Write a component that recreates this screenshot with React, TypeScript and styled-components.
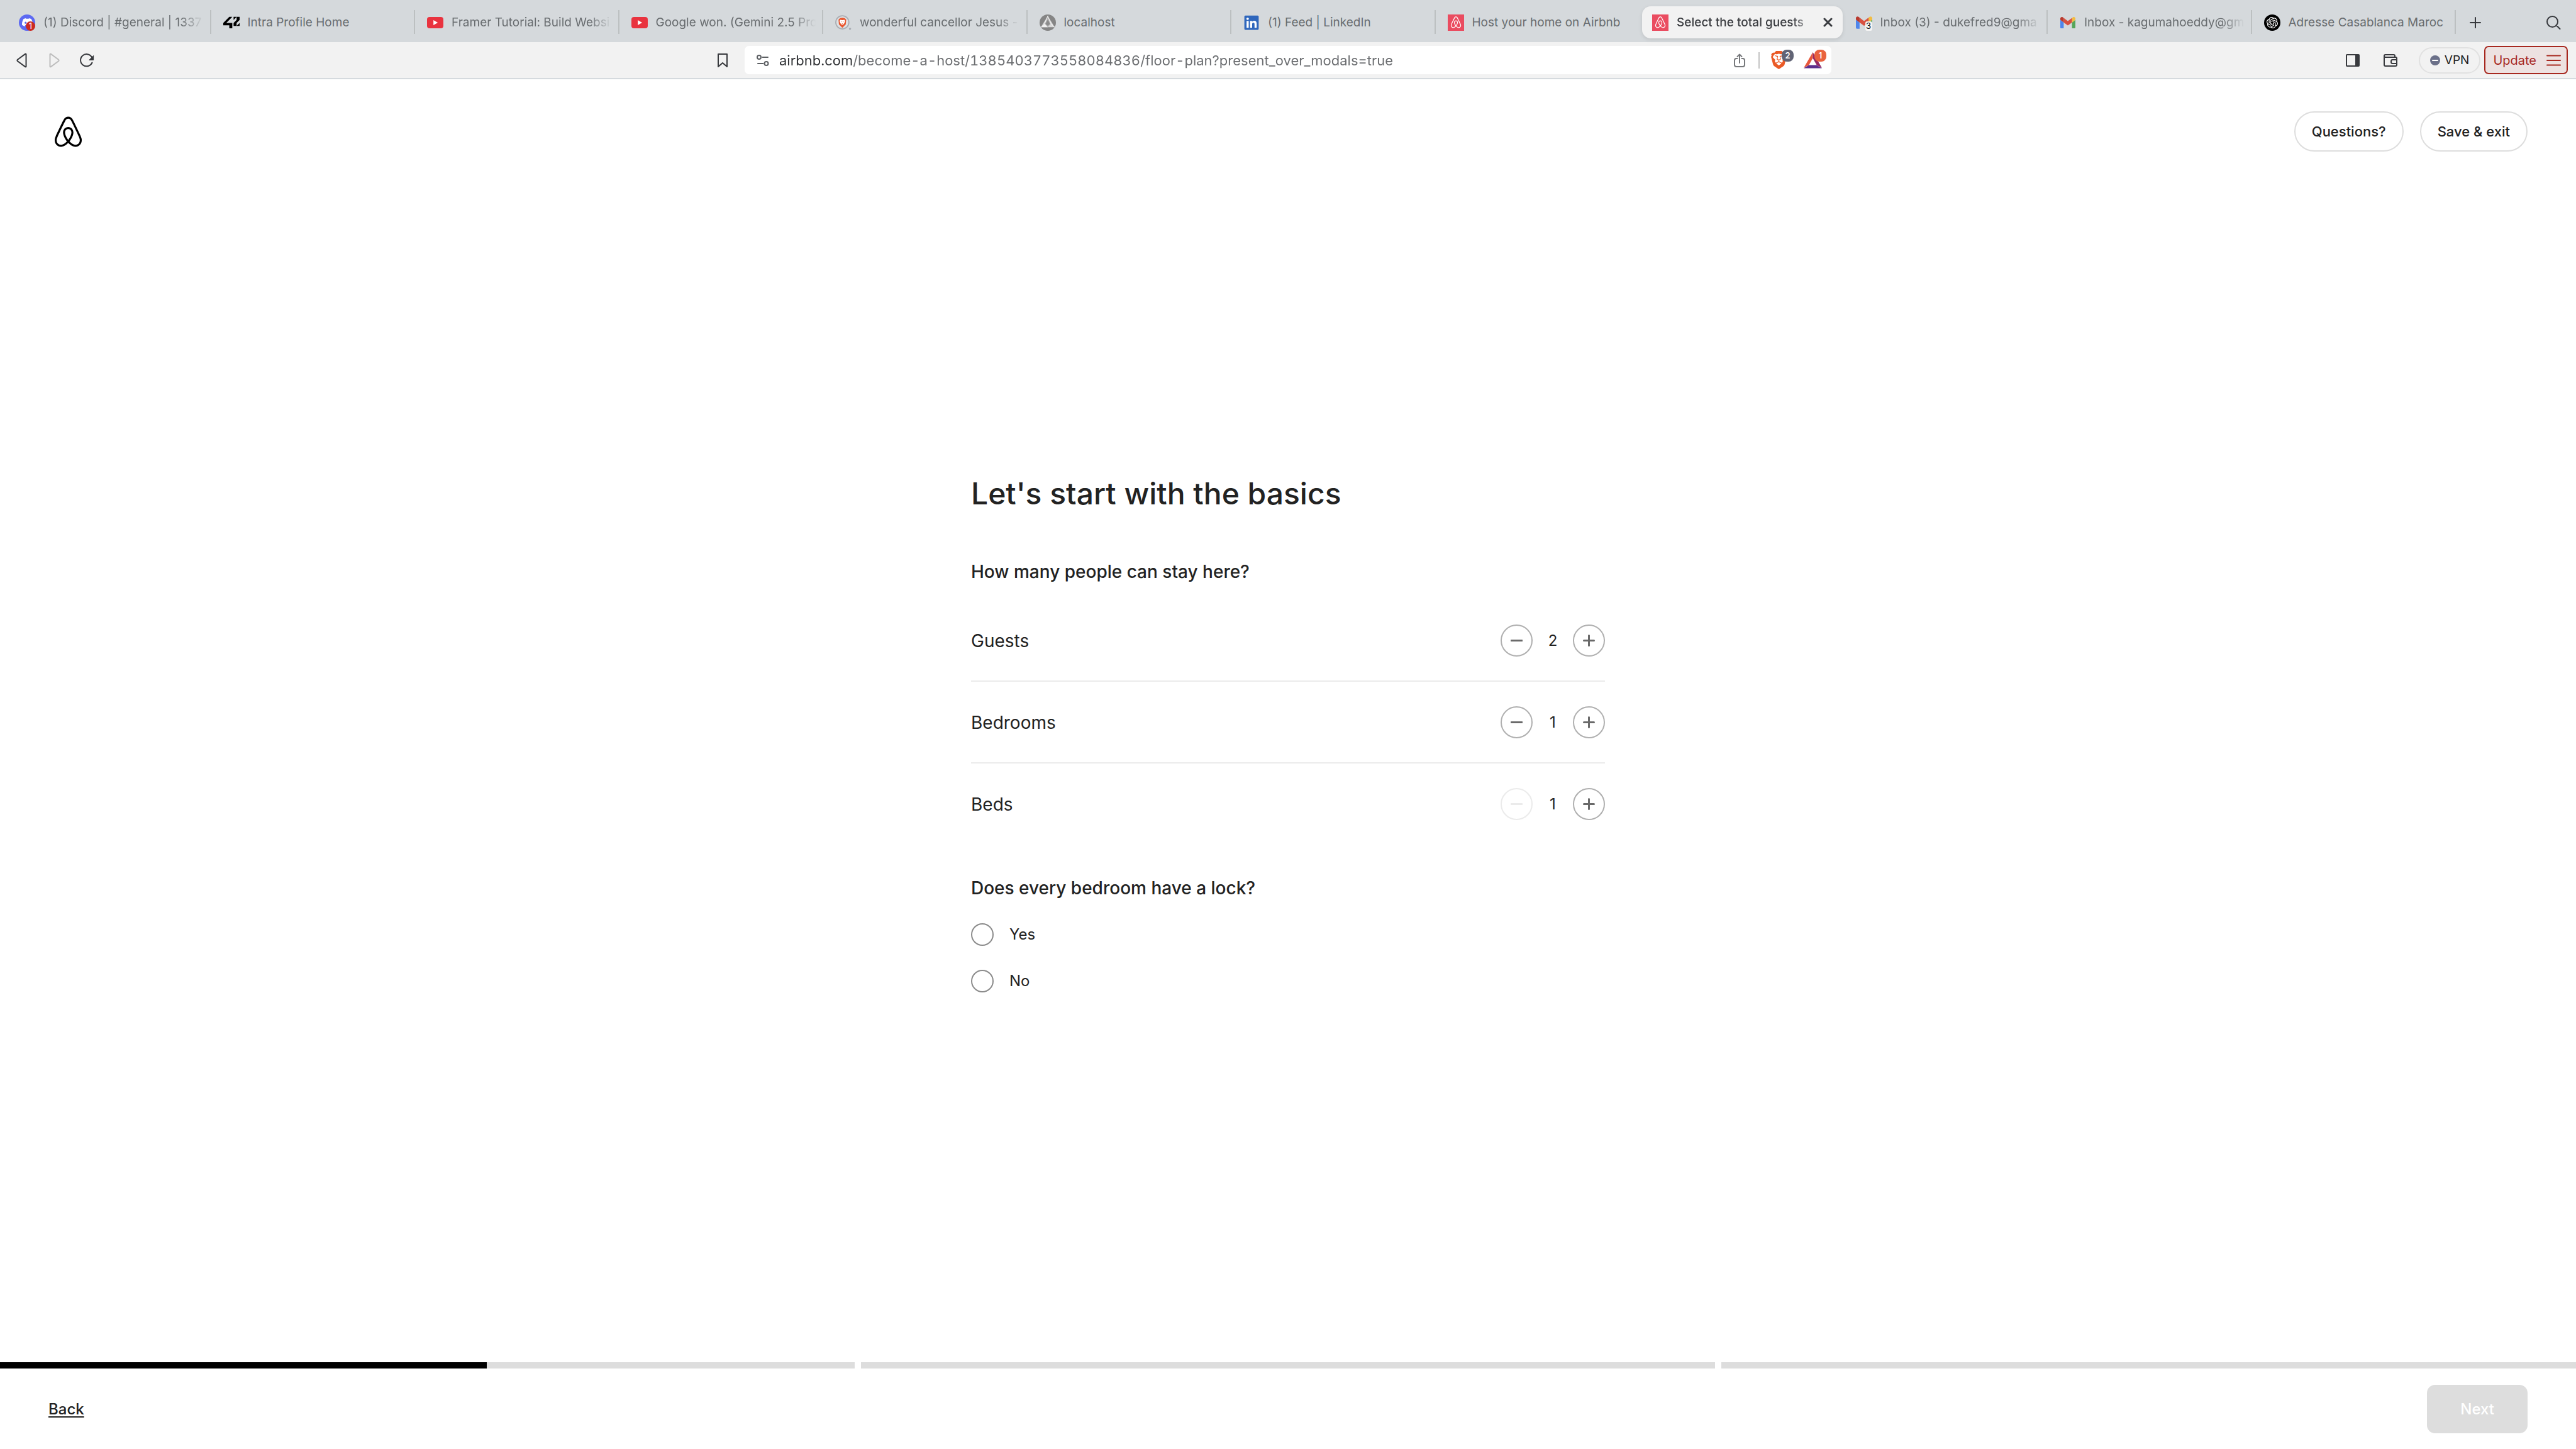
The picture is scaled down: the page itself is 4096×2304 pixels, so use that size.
import React, { useState } from "react";
import styled, { createGlobalStyle, css } from "styled-components";
import { SiDiscord, SiOpenai, SiBrave } from "react-icons/si";
import { FaLinkedin } from "react-icons/fa";

const GlobalStyle = createGlobalStyle`
  *, *::before, *::after { box-sizing: border-box; }
  body { margin: 0; background: #fff; }
  button, input { font: inherit; color: inherit; }
  button { padding: 0; border: 0; background: none; cursor: pointer; }
  svg { display: block; flex: none; }
`;

const Screen = styled.div`
  display: flex;
  flex-direction: column;
  min-height: 100vh;
  color: #222;
  font-family: Inter, "Liberation Sans", sans-serif;
`;

/* ---------- Browser tab strip ---------- */

const TabStrip = styled.div`
  display: flex;
  height: 67px;
  padding: 10px 0 6px 11px;
  background: #d5d9dc;
  color: #696d70;
  font-size: 19px;
  line-height: 24px;
`;

const TabList = styled.div`
  display: grid;
  grid-auto-flow: column;
  grid-auto-columns: minmax(0, 1fr);
  flex: 1;
  min-width: 0;
`;

const Tab = styled.div<{ $active?: boolean; $divided?: boolean }>`
  display: flex;
  align-items: center;
  gap: 13px;
  min-width: 0;
  padding: 0 12px 0 19px;
  position: relative;

  ${(p) =>
    p.$divided &&
    css`
      &::after {
        content: "";
        position: absolute;
        right: 0;
        top: 6px;
        bottom: 7px;
        width: 2px;
        background: #bcc0c1;
      }
    `}

  ${(p) =>
    p.$active &&
    css`
      margin: 0 2px 0 4px;
      padding: 0 16px;
      border-radius: 14px;
      background: #f2f2f2;
      box-shadow: 0 2px 6px rgba(0, 0, 0, 0.1);
      color: #3b3d41;
      font-weight: 500;
    `}
`;

const TabTitle = styled.span<{ $fade?: boolean }>`
  flex: 1;
  min-width: 0;
  overflow: hidden;
  white-space: nowrap;
  ${(p) => p.$fade && "mask-image: linear-gradient(to left, transparent, #000 36px);"}
`;

const Favicon = styled.span`
  display: grid;
  place-items: center;
  flex: none;
  width: 26px;
  height: 26px;
  position: relative;
`;

const Disc = styled.span<{ $bg: string }>`
  display: grid;
  place-items: center;
  width: 26px;
  height: 26px;
  border-radius: 50%;
  background: ${(p) => p.$bg};
  color: #fff;
`;

const LinkedinIcon = styled(FaLinkedin)`
  background: radial-gradient(#fff 60%, transparent 61%);
  color: #2e66bc;
`;

const FaviconCount = styled.span<{ $plain?: boolean }>`
  position: absolute;
  right: 0;
  bottom: 0;
  width: 15px;
  height: 15px;
  border-radius: 8px;
  background: #cc2a22;
  color: #fff;
  font-size: 13px;
  line-height: 15px;
  text-align: center;
  ${(p) =>
    p.$plain &&
    css`
      width: 11px;
      border-radius: 3px;
      background: #f4f4f4;
      color: #000;
    `}
`;

const StripActions = styled.div`
  display: flex;
  flex: none;
  align-items: center;
  justify-content: space-between;
  width: 191px;
  padding: 0 24px 0 22px;
  color: #37393d;
`;

/* ---------- Browser toolbar ---------- */

const Toolbar = styled.div`
  display: grid;
  grid-template-columns: 1fr minmax(0, 1728px) 1fr;
  align-items: center;
  height: 59px;
  border-bottom: 2px solid #d5dade;
  background: #f2f2f2;
  color: #37393d;
`;

const NavButtons = styled.div`
  display: flex;
  align-items: center;
  gap: 29px;
  padding: 0 24px;
`;

const IconButton = styled.button<{ $tint?: string; $last?: boolean }>`
  display: grid;
  place-items: center;
  ${(p) => p.$tint && `color: ${p.$tint};`}
  ${(p) => p.$last && "margin-left: auto;"}
`;

const AddressBar = styled.div`
  display: flex;
  align-items: center;
  height: 45px;
  padding: 0 8px 0 19px;
  border-radius: 7px;
  background: #fff;
`;

const AddressInput = styled.input`
  flex: 1;
  min-width: 0;
  height: 32px;
  margin-left: 16px;
  padding: 0;
  border: 0;
  outline: 0;
  background: linear-gradient(to right, #303235 118px, #6b6d70 118px);
  background-clip: text;
  color: transparent;
  font-size: 22px;
  font-variant-numeric: tabular-nums;
`;

const AddressDivider = styled.span`
  width: 2px;
  height: 26px;
  margin: 0 18px 0 21px;
  background: #c4c4c4;
`;

const BadgeButton = styled.button`
  display: flex;
  align-items: center;
  width: 36px;
  height: 30px;
  margin-right: 16px;
  position: relative;
  &:last-child { margin-right: 0; }
`;

const Badge = styled.span<{ $bg: string }>`
  position: absolute;
  top: -2px;
  right: 0;
  width: 19px;
  height: 19px;
  border-radius: 8px;
  background: ${(p) => p.$bg};
  color: #fff;
  font-size: 13px;
  font-weight: 600;
  line-height: 19px;
  text-align: center;
`;

const ToolbarEnd = styled.div`
  display: flex;
  align-items: center;
  justify-content: flex-end;
  padding-right: 13px;
`;

const EndIcons = styled.div`
  display: flex;
  gap: 38px;
  margin-right: 34px;
`;

const VpnButton = styled.button`
  display: flex;
  align-items: center;
  gap: 7px;
  height: 42px;
  margin-right: 6px;
  padding: 0 16px;
  border: 2px solid #e1e1e1;
  border-radius: 21px;
  color: #1d1f25;
  font-size: 19px;
`;

const UpdateButton = styled.button`
  display: flex;
  align-items: center;
  gap: 16px;
  height: 45px;
  padding: 0 9px 0 12px;
  border: 2px solid #a7281f;
  border-radius: 7px;
  background: #ede2e1;
  color: #a7281f;
  font-size: 20px;
`;

/* ---------- Page ---------- */

const PageHeader = styled.header`
  display: flex;
  align-items: center;
  justify-content: space-between;
  padding: 51px 77px 51px 83px;
`;

const HomeLink = styled.a`
  color: #000;
`;

const HeaderActions = styled.div`
  display: flex;
  gap: 26px;
`;

const PillButton = styled.button`
  height: 64px;
  padding: 0 26px;
  border: 2px solid #ddd;
  border-radius: 32px;
  background: #fff;
  font-size: 22px;
  font-weight: 500;
`;

const Main = styled.main`
  display: flex;
  flex: 1;
  flex-direction: column;
  align-items: center;
  justify-content: center;
  padding-bottom: 124px;
`;

const Form = styled.form`
  width: 100%;
  max-width: 1008px;
`;

const Title = styled.h1`
  margin: 0 0 76px;
  font-size: 48px;
  font-weight: 500;
  line-height: 58px;
`;

const Question = styled.h2`
  display: block;
  margin: 0;
  font-size: 28px;
  font-weight: 500;
  line-height: 38px;
`;

const CounterList = styled.div`
  margin: 26px 0 51px;
`;

const CounterRow = styled.div`
  display: flex;
  align-items: center;
  justify-content: space-between;
  padding: 39px 0 38px;
  font-size: 28px;
  line-height: 38px;
  & + & { border-top: 2px solid #ebebeb; }
`;

const Stepper = styled.div`
  display: flex;
  align-items: center;
`;

const StepButton = styled.button`
  display: grid;
  place-items: center;
  width: 51px;
  height: 51px;
  border: 2px solid #b0b0b0;
  border-radius: 50%;
  color: #6a6a6a;
  &:disabled {
    border-color: #ebebeb;
    color: #ebebeb;
    cursor: default;
  }
`;

const StepValue = styled.output`
  width: 64px;
  font-size: 24px;
  text-align: center;
`;

const Options = styled.fieldset`
  display: flex;
  flex-direction: column;
  gap: 38px;
  margin: 0;
  padding: 0;
  border: 0;
`;

const OptionsLegend = styled.legend`
  margin-bottom: 37px;
  padding: 0;
`;

const Option = styled.label`
  display: flex;
  align-items: center;
  gap: 25px;
  height: 36px;
  font-size: 24px;
  line-height: 34px;
`;

const Radio = styled.input`
  appearance: none;
  width: 36px;
  height: 36px;
  margin: 0;
  border: 2px solid #8c8c8c;
  border-radius: 50%;
  background: #fff;
  &:checked { border: 11px solid #222; }
`;

const Footer = styled.footer`
  display: flex;
  flex-direction: column;
`;

const Progress = styled.div`
  display: grid;
  grid-template-columns: repeat(3, 1fr);
  gap: 10px;
`;

const ProgressTrack = styled.div`
  height: 10px;
  background: #ddd;
`;

const ProgressFill = styled.div`
  height: 100%;
  background: #000;
`;

const FooterBar = styled.div`
  display: flex;
  align-items: center;
  justify-content: space-between;
  height: 128px;
  padding: 0 77px;
  font-size: 24px;
  font-weight: 500;
`;

const BackButton = styled.button`
  text-decoration: underline;
  text-decoration-thickness: 2px;
  text-underline-offset: 3px;
  text-decoration-skip-ink: none;
`;

const NextButton = styled.button`
  height: 77px;
  padding: 0 53px;
  border-radius: 13px;
  background: #ddd;
  color: #fff;
`;

/* ---------- Drawings ---------- */

const belo =
  "M16 1c2.008 0 3.463.963 4.751 3.269l.533 1.025c1.954 3.83 6.114 12.54 7.1 14.836l.145.353c.667 1.591.91 2.472.96 3.396l.01.415.001.228c0 4.062-2.877 6.478-6.357 6.478-2.224 0-4.556-1.258-6.709-3.386l-.257-.26-.172-.179h-.011l-.176.185c-2.044 2.1-4.267 3.42-6.414 3.615l-.28.019-.267.006C5.377 31 2.5 28.584 2.5 24.522l.005-.469c.026-.928.23-1.768.83-3.244l.216-.524c.966-2.298 6.083-12.989 7.707-16.034C12.537 1.963 13.992 1 16 1zm0 2c-1.239 0-2.053.539-2.987 2.21l-.523 1.008c-1.926 3.776-6.06 12.43-7.031 14.692l-.345.836c-.427 1.071-.573 1.655-.605 2.24l-.009.33v.206C4.5 27.395 6.411 29 8.857 29c1.773 0 3.87-1.236 5.831-3.354-2.295-2.938-3.855-6.45-3.855-8.91 0-2.913 1.933-5.386 5.178-5.42 3.223.034 5.156 2.507 5.156 5.42 0 2.456-1.555 5.96-3.855 8.907C19.277 27.766 21.37 29 23.142 29c2.447 0 4.358-1.605 4.358-4.478l-.004-.411c-.019-.672-.17-1.296-.714-2.62l-.248-.6c-1.065-2.478-5.993-12.768-7.538-15.664C18.053 3.539 17.24 3 16 3zm.01 10.316c-2.01.021-3.177 1.514-3.177 3.42 0 1.797 1.18 4.58 2.955 7.044l.21.287.174-.234c1.73-2.385 2.898-5.066 2.989-6.875l.006-.221c0-1.906-1.167-3.4-3.156-3.421h-.001z";

const Belo = ({ size }: { size: number }) => (
  <svg width={size} height={size} viewBox="0 0 32 32" fill="currentColor">
    <path d={belo} />
  </svg>
);

const AirbnbIcon = () => (
  <svg width="26" height="26" viewBox="0 0 32 32">
    <rect width="32" height="32" fill="#ea4c60" />
    <path d={belo} fill="#fff" transform="translate(4.2 3.4) scale(.74)" />
  </svg>
);

const FortyTwoIcon = () => (
  <svg width="26" height="26" viewBox="32 -184 896 896">
    <path d="M32 412.6h330.1V578h164.7V279.1H197.3L526.8-51.1H362.1L32 279.1zM597.9 114.2 762.7-51.1H597.9zM762.7 114.2 597.9 279.1v164.8h164.8V279.1L928 114.2V-51.1H762.7zM928 279.1 762.7 443.9H928z" />
  </svg>
);

const YoutubeIcon = () => (
  <svg width="26" height="26" viewBox="0 0 32 32">
    <rect y="5" width="32" height="22" rx="5" fill="#e9333f" />
    <path d="M12.5 11.2v9.6l8.6-4.8z" fill="#fff" />
  </svg>
);

const BraveSearchIcon = () => (
  <svg width="26" height="26" viewBox="0 0 32 32">
    <circle cx="14" cy="15.5" r="12.8" fill="#dfe2e4" stroke="#a9adb3" strokeWidth="2.2" />
    <circle cx="29" cy="28" r="2.2" fill="#a9adb3" />
    <path d="M14 6.500l4.500.5 3 3-.8 9.500L14 26l-6.700-6.500L6.500 10l3-3z" fill="#e8562e" />
    <path d="M10 10.500l4 .7 4-.7 1.500 2-1.500 4.500-2 2.300-2 1-2-1-2-2.300-1.500-4.500z" fill="#fff" />
    <path d="M11 13.200l2 .7-.3 1.500zM17 13.200l-2 .7.300 1.500zM12.600 17.600h2.800L14 19z" fill="#e8562e" />
  </svg>
);

const LocalhostIcon = () => (
  <svg width="26" height="26" viewBox="0 0 32 32">
    <defs>
      <clipPath id="disc"><circle cx="16" cy="16" r="16" /></clipPath>
    </defs>
    <g clipPath="url(#disc)">
      <path d="M0 0h32v32H0z" fill="#858585" />
      <path d="M16 3 2.500 25h27z" fill="#d9d9d9" />
      <path d="M16 3 10 18l6 7 6-7z" fill="#b3b3b3" />
      <path d="M16 10l-4.500 8.500L16 22l4.500-3.500z" fill="#8c8c8c" />
      <path d="M2.500 25 10 18l6 7z" fill="#f0f0f0" />
      <path d="M16 3l-6 15M16 3l6 15 7.500 7" fill="none" stroke="#fff" />
    </g>
  </svg>
);

const GmailIcon = ({ size }: { size: number }) => (
  <svg width={size} height={size} viewBox="0 -3 24 24">
    <path d="M1.600 18h3.800V8.700L0 4.600v11.800c0 .9.700 1.600 1.600 1.600z" fill="#4f86ec" />
    <path d="M18.600 18h3.800c.9 0 1.600-.7 1.600-1.600V4.600l-5.400 4.100z" fill="#56a55a" />
    <path d="M18.600 1.600v7.100L24 4.600V2.500c0-2-2.300-3.200-3.900-2z" fill="#f2bd42" />
    <path d="M5.400 8.700V1.600L12 6.600l6.600-5v7.100L12 13.600z" fill="#d8503f" />
    <path d="M0 2.500v2.100l5.400 4.100V1.600L3.900.5C2.300-.7 0 .5 0 2.500z" fill="#b83a2e" />
  </svg>
);

type Glyph = { d: string; w: number; h: number; s?: number };

/* Outline glyph drawn at its own pixel size. */
const Line = ({ d, w, h, s = 2 }: Glyph) => (
  <svg
    width={w}
    height={h}
    viewBox={`0 0 ${w} ${h}`}
    fill="none"
    stroke="currentColor"
    strokeWidth={s}
    strokeLinecap="round"
    strokeLinejoin="round"
  >
    <path d={d} />
  </svg>
);

const ReloadIcon = () => (
  <svg width="24" height="24" viewBox="0 0 24 24" fill="none" stroke="currentColor" strokeWidth="2">
    <path d="M20.500 15.500A9.600 9.600 0 1 1 19.800 6.600" strokeLinecap="round" />
    <path d="M22.600 4.500v7h-6.800z" fill="currentColor" stroke="currentColor" strokeWidth="1" strokeLinejoin="round" />
  </svg>
);

const SettingsIcon = () => (
  <svg width="20" height="20" viewBox="0 0 20 20" fill="none" stroke="#5c5f63" strokeWidth="2">
    <circle cx="4" cy="5" r="3" />
    <path d="M9.500 5H18M2 15h8.500" strokeLinecap="round" />
    <circle cx="15.5" cy="15" r="3" />
  </svg>
);

const BraveIcon = () => (
  <svg width="25" height="29" viewBox="0 0 25 29">
    <path d="M5 4h15l1 13-8.500 7L4 17z" fill="#fff" />
    <g transform="translate(-2 0) scale(1.205)">
      <SiBrave size={24} color="#ea5a26" />
    </g>
  </svg>
);

const BatIcon = () => (
  <svg width="29" height="26" viewBox="0 0 29 26">
    <path d="M14.500 0 0 25l8.300-4.500 6.200-11z" fill="#e8573a" />
    <path d="M14.500 0 29 25l-8.300-4.500-6.200-11z" fill="#962a63" />
    <path d="M0 25.500h29l-8.300-5H8.300z" fill="#5d2f8d" />
  </svg>
);

const PanelIcon = () => (
  <svg width="22" height="20" viewBox="0 0 22 20">
    <rect x="1" y="1" width="20" height="18" rx="1" fill="none" stroke="currentColor" strokeWidth="2" />
    <path d="M15 1h6v18h-6z" fill="currentColor" />
  </svg>
);

const VpnIcon = () => (
  <svg width="16" height="16" viewBox="0 0 16 16">
    <circle cx="8" cy="8" r="8" fill="#6b7089" />
    <path d="M4 8h8" stroke="#fff" strokeWidth="2" strokeLinecap="round" />
  </svg>
);

/* ---------- Data ---------- */

const tabs: { title: string; icon: React.ReactNode; active?: boolean; fade?: boolean }[] = [
  {
    title: "(1) Discord | #general | 1337",
    fade: true,
    icon: (
      <>
        <Disc $bg="#5d6af2"><SiDiscord size={17} /></Disc>
        <FaviconCount>1</FaviconCount>
      </>
    ),
  },
  { title: "Intra Profile Home", icon: <FortyTwoIcon /> },
  { title: "Framer Tutorial: Build Websi", fade: true, icon: <YoutubeIcon /> },
  { title: "Google won. (Gemini 2.5 Pro", fade: true, icon: <YoutubeIcon /> },
  { title: "wonderful cancellor Jesus -", fade: true, icon: <BraveSearchIcon /> },
  { title: "localhost", icon: <LocalhostIcon /> },
  { title: "(1) Feed | LinkedIn", icon: <LinkedinIcon size={26} /> },
  { title: "Host your home on Airbnb", icon: <AirbnbIcon /> },
  { title: "Select the total guests", fade: true, icon: <AirbnbIcon />, active: true },
  {
    title: "Inbox (3) - dukefred9@gma",
    fade: true,
    icon: (
      <>
        <GmailIcon size={26} />
        <FaviconCount $plain>3</FaviconCount>
      </>
    ),
  },
  { title: "Inbox - kagumahoeddy@gm", fade: true, icon: <GmailIcon size={24} /> },
  { title: "Adresse Casablanca Maroc", icon: <Disc $bg="#000"><SiOpenai size={18} /></Disc> },
];

const progress = [57, 0, 0];

function Counter({ label, initial, min }: { label: string; initial: number; min: number }) {
  const [count, setCount] = useState(initial);
  return (
    <CounterRow role="group" aria-label={label}>
      <span>{label}</span>
      <Stepper>
        <StepButton type="button" aria-label={`Fewer ${label}`} disabled={count <= min} onClick={() => setCount(count - 1)}>
          <Line w={19} h={19} d="M1 9.500h17" s={3} />
        </StepButton>
        <StepValue>{count}</StepValue>
        <StepButton type="button" aria-label={`More ${label}`} onClick={() => setCount(count + 1)}>
          <Line w={19} h={19} d="M1.500 9.500h16M9.500 1.500v16" s={3} />
        </StepButton>
      </Stepper>
    </CounterRow>
  );
}

export default function App() {
  const [url, setUrl] = useState(
    "airbnb.com/become-a-host/1385403773558084836/floor-plan?present_over_modals=true"
  );
  return (
    <Screen>
      <GlobalStyle />
      <TabStrip>
        <TabList>
          {tabs.map((tab, i) => (
            <Tab key={tab.title} $active={tab.active} $divided={!tab.active && !tabs[i + 1]?.active}>
              <Favicon>{tab.icon}</Favicon>
              <TabTitle $fade={tab.fade}>{tab.title}</TabTitle>
              {tab.active && (
                <IconButton aria-label="Close tab">
                  <Line w={15} h={15} s={3} d="M2 2l11 11M13 2 2 13" />
                </IconButton>
              )}
            </Tab>
          ))}
        </TabList>
        <StripActions>
          <IconButton aria-label="New tab">
            <Line w={18} h={18} d="M1 9h16M9 1v16" />
          </IconButton>
          <IconButton aria-label="Search tabs">
            <Line w={23} h={22} d="M18 9.500a8.500 8.500 0 1 1-17 0a8.500 8.500 0 0 1 17 0zM15.500 15l6 6" />
          </IconButton>
        </StripActions>
      </TabStrip>

      <Toolbar>
        <NavButtons>
          <IconButton aria-label="Back">
            <Line w={22} h={24} d="M17.500 2.500v19q0 1.500-1.400.6L4 13.200q-1.300-1.200 0-2.400L16.100 1.900q1.400-.9 1.400.6z" />
          </IconButton>
          <IconButton aria-label="Forward" $tint="#bdbdbd">
            <Line w={22} h={24} d="M4.500 2.500v19q0 1.500 1.400.6L18 13.200q1.300-1.200 0-2.400L5.900 1.900q-1.400-.9-1.400.6z" />
          </IconButton>
          <IconButton aria-label="Reload"><ReloadIcon /></IconButton>
          <IconButton aria-label="Bookmark" $last>
            <Line w={22} h={24} d="M4 2h14v20l-7-6-7 6z" />
          </IconButton>
        </NavButtons>
        <AddressBar>
          <IconButton aria-label="Site information"><SettingsIcon /></IconButton>
          <AddressInput aria-label="Address" spellCheck={false} value={url} onChange={(e) => setUrl(e.target.value)} />
          <IconButton aria-label="Share" $tint="#77797c">
            <Line w={18} h={22} d="M5.500 8H4Q1 8 1 11v7q0 3 3 3h10q3 0 3-3v-7q0-3-3-3h-1.500M9 15V1.500M5.500 5 9 1.500 12.500 5" />
          </IconButton>
          <AddressDivider />
          <BadgeButton aria-label="Shields">
            <BraveIcon />
            <Badge $bg="#616475">2</Badge>
          </BadgeButton>
          <BadgeButton aria-label="Rewards">
            <BatIcon />
            <Badge $bg="#e9623e">1</Badge>
          </BadgeButton>
        </AddressBar>
        <ToolbarEnd>
          <EndIcons>
            <IconButton aria-label="Side panel"><PanelIcon /></IconButton>
            <IconButton aria-label="Wallet">
              <Line w={22} h={20} d="M1 4v13q0 2 2 2h16q2 0 2-2V7q0-2-2-2H3Q1 5 1 3t2-2h13q2 0 2 2v2M21 9h-7q-2 0-2 3t2 3h7" />
            </IconButton>
          </EndIcons>
          <VpnButton><VpnIcon />VPN</VpnButton>
          <UpdateButton>
            Update
            <Line w={23} h={18} d="M1 1.500h21M1 9h21M1 16.500h21" />
          </UpdateButton>
        </ToolbarEnd>
      </Toolbar>

      <PageHeader>
        <HomeLink href="#" aria-label="Airbnb homepage"><Belo size={51} /></HomeLink>
        <HeaderActions>
          <PillButton>Questions?</PillButton>
          <PillButton>Save &amp; exit</PillButton>
        </HeaderActions>
      </PageHeader>

      <Main>
        <Form>
          <Title>Let's start with the basics</Title>
          <Question>How many people can stay here?</Question>
          <CounterList>
            <Counter label="Guests" initial={2} min={1} />
            <Counter label="Bedrooms" initial={1} min={0} />
            <Counter label="Beds" initial={1} min={1} />
          </CounterList>
          <Options>
            <OptionsLegend><Question as="span">Does every bedroom have a lock?</Question></OptionsLegend>
            <Option><Radio type="radio" name="lock" value="yes" />Yes</Option>
            <Option><Radio type="radio" name="lock" value="no" />No</Option>
          </Options>
        </Form>
      </Main>

      <Footer>
        <Progress>
          {progress.map((done, i) => (
            <ProgressTrack key={i}>
              <ProgressFill style={{ width: `${done}%` }} />
            </ProgressTrack>
          ))}
        </Progress>
        <FooterBar>
          <BackButton>Back</BackButton>
          <NextButton disabled>Next</NextButton>
        </FooterBar>
      </Footer>
    </Screen>
  );
}
